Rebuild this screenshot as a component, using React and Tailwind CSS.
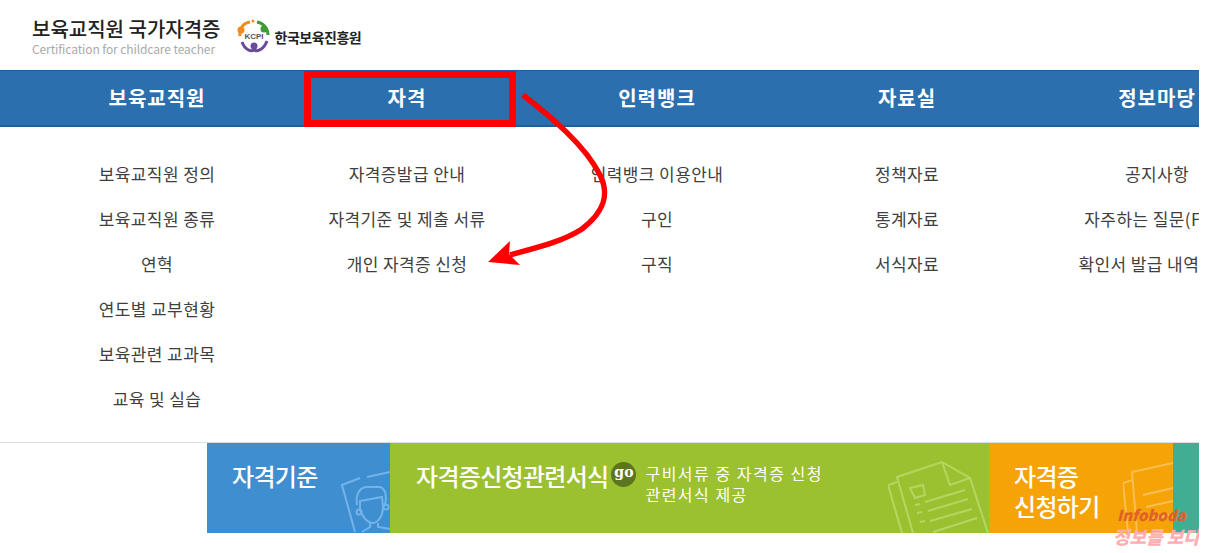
const font = { fontFamily: '"Noto Sans CJK KR", "Noto Sans", sans-serif' };

const columns = [
  { title: "보육교직원", items: ["보육교직원 정의", "보육교직원 종류", "연혁", "연도별 교부현황", "보육관련 교과목", "교육 및 실습"] },
  { title: "자격", items: ["자격증발급 안내", "자격기준 및 제출 서류", "개인 자격증 신청"] },
  { title: "인력뱅크", items: ["인력뱅크 이용안내", "구인", "구직"] },
  { title: "자료실", items: ["정책자료", "통계자료", "서식자료"] },
  { title: "정보마당", items: ["공지사항", "자주하는 질문(FAQ)", "확인서 발급 내역 조회"] },
];

function Logo() {
  return (
    <svg width="38" height="38" viewBox="0 0 38 38" fill="none">
      <path d="M5 19C4 12 8 6 15 5" stroke="#f08a1d" strokeWidth="3" />
      <circle cx="6" cy="13" r="3.5" fill="#f08a1d" />
      <circle cx="18" cy="4" r="1.5" fill="#f08a1d" />
      <path d="M22 5C28 6 33 11 33 18" stroke="#3f9c35" strokeWidth="3" />
      <circle cx="29" cy="12" r="3.5" fill="#3f9c35" />
      <path d="M7 25C10 33 16 35 19 33C23 35 29 32 32 24" stroke="#6b4a9c" strokeWidth="3" />
      <circle cx="19" cy="29" r="3.5" fill="#6b4a9c" />
      <text x="19" y="21.5" textAnchor="middle" fontSize="8" fontWeight="700" fill="#555" fontFamily="Liberation Sans">KCPI</text>
    </svg>
  );
}

function IdCardIcon() {
  return (
    <svg width="50" height="62" viewBox="0 0 50 62" fill="none" stroke="#74b3ea" strokeWidth="2" className="absolute left-[134px] top-[28px]">
      <path d="M14 61L1 14L19 7M26 6L49 1" />
      <path d="M16 34C14 22 20 16 26 16L39 16C45 18 46 26 44 34" />
      <path d="M19 30L41 26L42 36C42 46 36 52 32 52C26 52 20 44 19 38Z" />
      <circle cx="18" cy="41" r="2.5" />
      <circle cx="45" cy="36" r="2.5" />
      <path d="M29 52V56L21 61M37 52V56L49 58" />
    </svg>
  );
}

function PaperIcon() {
  return (
    <svg width="101" height="73" viewBox="0 0 101 73" fill="none" stroke="#b6d563" strokeWidth="2" className="absolute left-[498px] top-[17px]">
      <path d="M14 73L0 25L9 22M25 73L9 17L54 2L82 18L100 73" />
      <path d="M54 2L62 25L82 18" />
      <path d="M22 28L35 25L37 35L27 38Z" />
      <path d="M37 42L77 30M40 51L80 39M42 61L84 49M45 72L89 58" />
      <path d="M27 45L32 44M29 53L34 52M32 62L37 61" />
    </svg>
  );
}

function FormsIcon() {
  return (
    <svg width="50" height="73" viewBox="0 0 50 73" fill="none" stroke="#f9bf52" strokeWidth="2" className="absolute left-[134px] top-[17px]">
      <path d="M5 72L0 23L10 20M14 72L9 12L50 3" />
      <path d="M20 35L50 28M23 47L50 41M25 60L50 54" />
    </svg>
  );
}

function NavCell({ children }) {
  return <div className="w-[250px] shrink-0 text-center">{children}</div>;
}

export default function App() {
  return (
    <div className="relative w-[1199px] h-[553px] overflow-hidden bg-white" style={font}>
      <header className="h-[70px] flex items-center pl-[32px] pt-[4px]">
        <div>
          <div className="text-[20px] font-medium leading-[24px] text-[#222]">보육교직원 국가자격증</div>
          <div className="text-[12px] leading-[16px] tracking-[-0.1px] text-[#aaa]">Certification for childcare teacher</div>
        </div>
        <div className="flex items-center ml-[14px] mt-[-2px]">
          <Logo />
          <span className="text-[14px] font-bold tracking-[-0.5px] text-[#222] ml-[2px] mt-[3px]">한국보육진흥원</span>
        </div>
      </header>

      <nav className="h-[57px] flex pl-[32px] bg-[#2c6fae] border-t border-[#1d5f9f] border-b-2 border-b-[#1d5f9f]">
        {columns.map((col) => (
          <NavCell key={col.title}>
            <div className="text-[20px] font-bold leading-[53px] tracking-[1px] text-white">{col.title}</div>
          </NavCell>
        ))}
      </nav>

      <div className="h-[316px] flex pl-[32px] pt-[24px] border-b border-[#ddd]">
        {columns.map((col) => (
          <NavCell key={col.title}>
            <ul>
              {col.items.map((item) => (
                <li key={item} className="h-[45px] leading-[45px] text-[17px] tracking-[0.4px] text-[#3f3f3f] whitespace-nowrap">{item}</li>
              ))}
            </ul>
          </NavCell>
        ))}
      </div>

      <section className="h-[90px] flex pl-[207px] text-white">
        <div className="relative w-[183px] bg-[#3f8ecf] overflow-hidden pl-[25px] pt-[17px]">
          <div className="text-[24px] font-medium leading-[32px] tracking-[-0.7px]">자격기준</div>
          <IdCardIcon />
        </div>
        <div className="relative w-[599px] bg-[#9cc130] overflow-hidden pl-[26px] pt-[17px] flex items-start">
          <div className="text-[24px] font-medium leading-[32px] tracking-[-0.7px] whitespace-nowrap">자격증신청관련서식</div>
          <div className="w-[25px] h-[25px] ml-[3px] mt-[2px] rounded-full bg-[#5d7520] text-center font-['DejaVu_Serif'] text-[14px] font-bold leading-[20px]">go</div>
          <div className="ml-[9px] mt-[3px] text-[16px] leading-[21px] tracking-[1.5px]">
            <div>구비서류 중 자격증 신청</div>
            <div>관련서식 제공</div>
          </div>
          <PaperIcon />
        </div>
        <div className="relative w-[184px] bg-[#f5a306] overflow-hidden pl-[25px] pt-[18px]">
          <div className="text-[24px] font-medium leading-[30px] tracking-[-0.7px]">자격증<br />신청하기</div>
          <FormsIcon />
        </div>
        <div className="w-[26px] bg-[#41ae93]" />
      </section>

      <div className="absolute left-[304px] top-[71px] w-[212px] h-[56px] border-[7px] border-[#ff0000]" />

      <svg width="140" height="180" viewBox="0 0 140 180" fill="none" className="absolute left-[480px] top-[90px]">
        <path d="M43 5C70 26 105 55 120 85C130 105 124 122 102 139C82 152 55 158 30 165" stroke="#ff0000" strokeWidth="5.5" />
        <path d="M8 172L30 151L29 164L40 175Z" fill="#ff0000" />
      </svg>

      <div className="absolute left-[1113px] top-[506px] italic w-[84px]">
        <div className="pl-[4px] text-[15px] font-black leading-[17px] text-[#e0602a] whitespace-nowrap">Infoboda</div>
        <div className="text-[18px] font-black leading-[20px] text-[#ffadb0] whitespace-nowrap mt-[3px]">정보를 보다</div>
      </div>
    </div>
  );
}
